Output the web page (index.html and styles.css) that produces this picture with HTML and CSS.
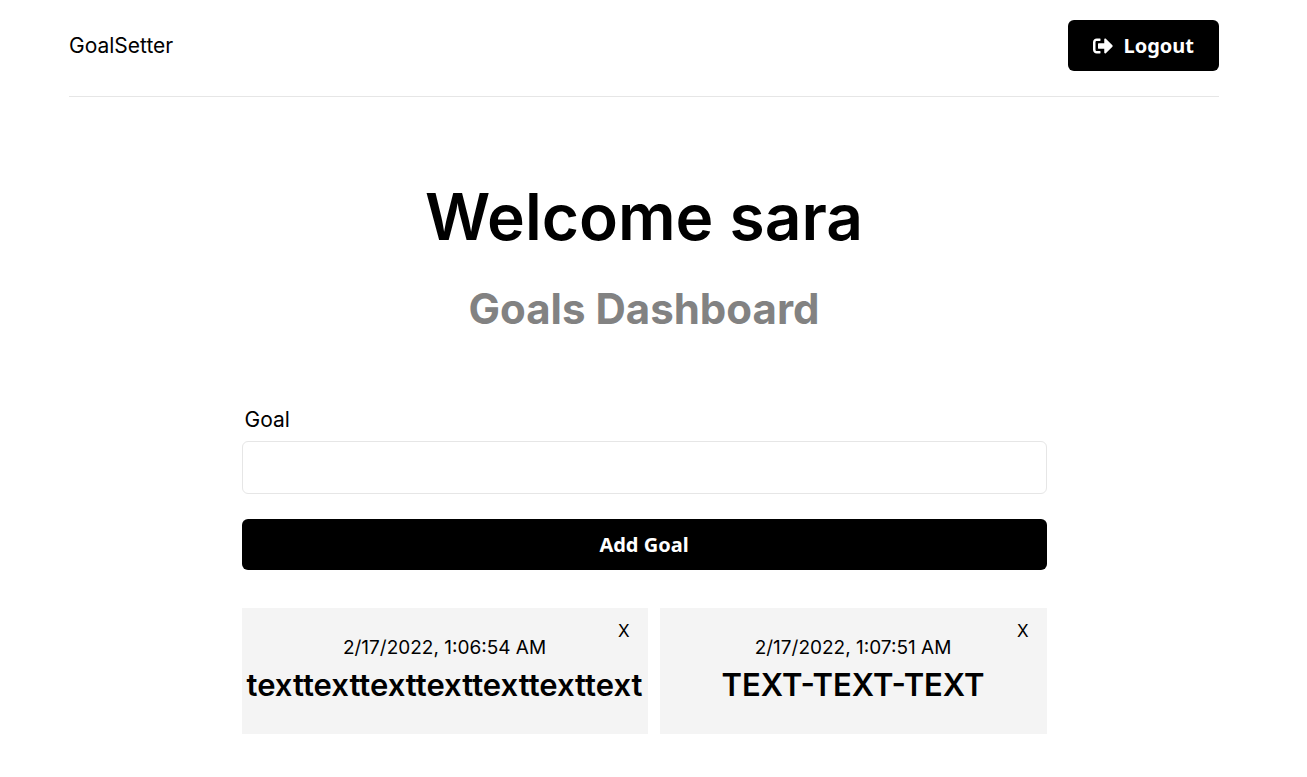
FILE: index.html
```html
<!DOCTYPE html>
<html lang="en">
<head>
<meta charset="utf-8">
<meta name="viewport" content="width=device-width, initial-scale=1">
<title>GoalSetter</title>
<link rel="stylesheet" href="styles.css">
</head>
<body>
<div class="container">
  <header class="header">
    <a class="logo" href="#">GoalSetter</a>
    <button class="btn" type="button">
      <svg class="btn-icon" viewBox="0 0 512 512" aria-hidden="true"><path d="M497 273L329 441c-15 15-41 4.500-41-17v-96H152c-13.300 0-24-10.700-24-24v-96c0-13.300 10.700-24 24-24h136V88c0-21.400 25.900-32 41-17l168 168c9.300 9.400 9.300 24.600 0 34zM192 436v-40c0-6.600-5.400-12-12-12H96c-17.700 0-32-14.300-32-32V160c0-17.700 14.300-32 32-32h84c6.600 0 12-5.400 12-12V76c0-6.600-5.400-12-12-12H96c-53 0-96 43-96 96v192c0 53 43 96 96 96h84c6.600 0 12-5.400 12-12z"/></svg>
      Logout
    </button>
  </header>
  <main>
    <section class="heading">
      <h1 class="title">Welcome sara</h1>
      <p class="subtitle">Goals Dashboard</p>
    </section>
    <form class="form">
      <label class="label" for="goal">Goal</label>
      <input class="input" type="text" id="goal" name="goal">
      <button class="btn btn-block" type="button">Add Goal</button>
    </form>
    <section class="goals">
      <article class="goal">
        <div class="date">2/17/2022, 1:06:54 AM</div>
        <h2 class="goal-text">texttexttexttexttexttexttext</h2>
        <button class="close" type="button">X</button>
      </article>
      <article class="goal">
        <div class="date">2/17/2022, 1:07:51 AM</div>
        <h2 class="goal-text">TEXT-TEXT-TEXT</h2>
        <button class="close" type="button">X</button>
      </article>
    </section>
  </main>
</div>
</body>
</html>
```

FILE: styles.css
```css
* {
  box-sizing: border-box;
  margin: 0;
  padding: 0;
}

body {
  padding: 0 88px 0 69px;
  background: #fff;
  color: #000;
  font: 21px/30px Inter, sans-serif;
}

.header {
  display: flex;
  justify-content: space-between;
  align-items: center;
  padding: 20px 0 25px;
  border-bottom: 1px solid #e6e6e6;
}

.logo {
  color: #000;
  text-decoration: none;
}

.btn {
  display: flex;
  align-items: center;
  justify-content: center;
  gap: 11px;
  padding: 12px 25px;
  border: 0;
  border-radius: 6px;
  background: #000;
  color: #fff;
  font: 700 20px/27px "Noto Sans", sans-serif;
  cursor: pointer;
}

.btn-icon {
  width: 20px;
  height: 20px;
  fill: currentColor;
}

.btn-block {
  width: 100%;
  margin-top: 25px;
}

.heading {
  padding-top: 86px;
  text-align: center;
}

.title {
  font-size: 64px;
  font-weight: 600;
  line-height: 68px;
}

.subtitle {
  margin-top: 28px;
  color: #828282;
  font-size: 42px;
  font-weight: 700;
  line-height: 60px;
}

.form,
.goals {
  width: 70%;
  margin: 0 auto;
}

.form {
  padding-top: 66px;
}

.label {
  display: block;
  padding-left: 3px;
}

.input {
  display: block;
  width: 100%;
  height: 53px;
  margin-top: 6px;
  padding: 10px;
  border: 1px solid #e6e6e6;
  border-radius: 6px;
  font: inherit;
}

.goals {
  display: grid;
  grid-template-columns: 406fr 387fr;
  gap: 12px;
  padding: 38px 0;
}

.goal {
  position: relative;
  padding: 25px 0 30px;
  background: #f4f4f4;
  text-align: center;
}

.date {
  font-size: 19px;
}

.goal-text {
  margin-top: 3px;
  font-size: 31px;
  font-weight: 600;
  line-height: 38px;
}

.close {
  position: absolute;
  top: 8px;
  right: 18px;
  border: 0;
  background: none;
  font: 17px/30px Inter, sans-serif;
  cursor: pointer;
}
```
